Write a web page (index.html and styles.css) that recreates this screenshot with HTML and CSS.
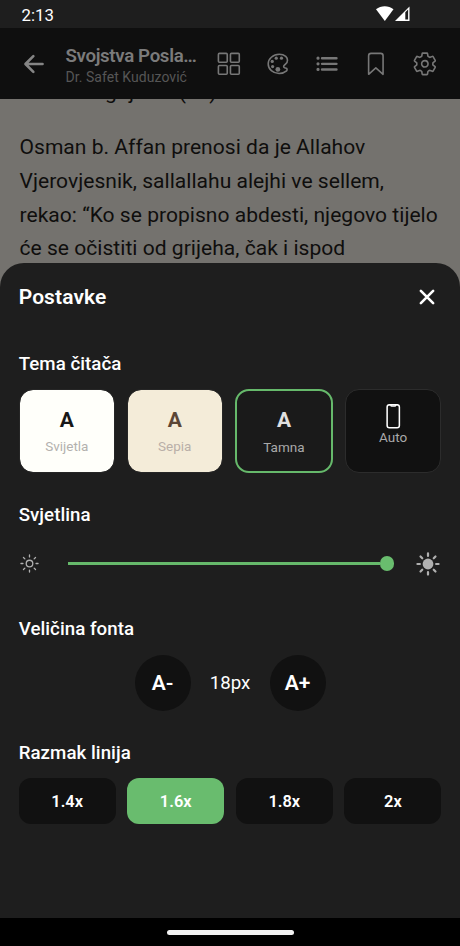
FILE: index.html
```html
<!DOCTYPE html>
<html lang="bs">
<head>
<meta charset="utf-8">
<title>Postavke</title>
<link rel="stylesheet" href="styles.css">
</head>
<body>
<div class="screen">
  <div class="status">
    <span class="time">2:13</span>
    <svg class="signals" viewBox="0 0 36 16" width="36" height="16"><path d="M1 3.3C6-.9 13.500-.9 18.500 3.300L9.800 15z" fill="#fff"/><path d="M34.500.5V15H20z" fill="#fff"/><path d="M30.300 6.200 33.100 3.500V13.600H30.300z" fill="#1e1e1e"/></svg>
  </div>
  <header class="bar">
    <svg class="icon back" viewBox="0 0 512 512"><path class="thick" d="M244 400 100 256l144-144M120 256h292"/></svg>
    <div class="book">
      <div class="book-title">Svojstva Posla…</div>
      <div class="book-author">Dr. Safet Kuduzović</div>
    </div>
    <nav class="tools">
      <svg class="icon" viewBox="0 0 512 512"><rect x="48" y="48" width="176" height="176" rx="20"/><rect x="288" y="48" width="176" height="176" rx="20"/><rect x="48" y="288" width="176" height="176" rx="20"/><rect x="288" y="288" width="176" height="176" rx="20"/></svg>
      <svg class="icon" viewBox="0 0 512 512"><path d="M430.110 347.900c-6.600-6.100-16.300-7.600-24.600-9-11.500-1.900-15.900-4-22.600-10-14.300-12.700-14.300-31.100 0-43.800l30.300-26.900c46.400-41 46.400-108.200 0-149.200-34.200-30.100-80.100-45-127.800-45-55.700 0-113.900 20.300-158.800 60.100-83.500 73.800-83.500 194.700 0 268.500 41.500 36.700 97.500 55 152.900 55.400h1.700c55.400 0 110-17.900 148.800-52.400 14.400-12.700 12-36.600.1-47.700z"/><g class="solid"><circle cx="144" cy="208" r="32"/><circle cx="152" cy="311" r="32"/><circle cx="224" cy="144" r="32"/><circle cx="256" cy="367" r="48"/><circle cx="328" cy="144" r="32"/></g></svg>
      <svg class="icon" viewBox="0 0 512 512"><path class="thick" d="M160 144h288M160 256h288M160 368h288"/><circle cx="80" cy="144" r="16"/><circle cx="80" cy="256" r="16"/><circle cx="80" cy="368" r="16"/></svg>
      <svg class="icon" viewBox="0 0 512 512"><path d="M352 48H160a48 48 0 0 0-48 48v368l144-128 144 128V96a48 48 0 0 0-48-48z"/></svg>
      <svg class="icon" viewBox="0 0 512 512"><path d="M262.290 192.310a64 64 0 1 0 57.400 57.400 64.130 64.130 0 0 0-57.400-57.400zM416.390 256a154.340 154.340 0 0 1-1.530 20.790l45.210 35.460a10.810 10.810 0 0 1 2.450 13.750l-42.770 74a10.810 10.810 0 0 1-13.140 4.590l-44.900-18.080a16.110 16.110 0 0 0-15.170 1.750A164.480 164.480 0 0 1 325 400.800a15.940 15.940 0 0 0-8.820 12.140l-6.730 47.890a11.080 11.080 0 0 1-10.680 9.170h-85.540a11.110 11.110 0 0 1-10.690-8.870l-6.720-47.820a16.070 16.070 0 0 0-9-12.220 155.300 155.300 0 0 1-21.460-12.570 16 16 0 0 0-15.110-1.710l-44.890 18.070a10.810 10.810 0 0 1-13.140-4.580l-42.770-74a10.800 10.800 0 0 1 2.450-13.750l38.210-30a16.050 16.050 0 0 0 6-14.080c-.36-4.170-.58-8.330-.58-12.500s.21-8.270.58-12.350a16 16 0 0 0-6.070-13.940l-38.190-30A10.810 10.810 0 0 1 49.480 186l42.770-74a10.810 10.810 0 0 1 13.140-4.590l44.900 18.080a16.110 16.110 0 0 0 15.170-1.750A164.480 164.480 0 0 1 187 111.200a15.940 15.940 0 0 0 8.820-12.140l6.730-47.890A11.080 11.080 0 0 1 213.230 42h85.540a11.110 11.110 0 0 1 10.690 8.870l6.720 47.820a16.070 16.070 0 0 0 9 12.220 155.300 155.300 0 0 1 21.460 12.570 16 16 0 0 0 15.110 1.710l44.890-18.070a10.810 10.810 0 0 1 13.140 4.580l42.770 74a10.800 10.800 0 0 1-2.450 13.750l-38.210 30a16.050 16.050 0 0 0-6.050 14.080c.33 4.140.55 8.300.55 12.470z"/></svg>
    </nav>
  </header>
  <main class="reader">
    <p class="previous">grijeha. (12)</p>
    <p>Osman b. Affan prenosi da je Allahov<br>Vjerovjesnik, sallallahu alejhi ve sellem,<br>rekao: “Ko se propisno abdesti, njegovo tijelo<br>će se očistiti od grijeha, čak i ispod</p>
  </main>
  <section class="sheet">
    <div class="sheet-head">
      <h1>Postavke</h1>
      <svg class="icon close" viewBox="0 0 512 512"><path class="thick" d="M368 368 144 144M368 144 144 368"/></svg>
    </div>
    <h2>Tema čitača</h2>
    <div class="themes">
      <div class="theme light"><b>A</b><span>Svijetla</span></div>
      <div class="theme sepia"><b>A</b><span>Sepia</span></div>
      <div class="theme dark"><b>A</b><span>Tamna</span></div>
      <div class="theme auto"><svg class="icon phone" viewBox="0 0 512 512"><rect x="128" y="16" width="256" height="480" rx="48"/><path d="M176 16h24a8 8 0 0 1 8 8 16 16 0 0 0 16 16h64a16 16 0 0 0 16-16 8 8 0 0 1 8-8h24"/></svg><span>Auto</span></div>
    </div>
    <h2 class="h-bright">Svjetlina</h2>
    <div class="brightness">
      <svg class="icon sun-low" viewBox="0 0 512 512"><path d="M256 48v48M256 416v48M403.080 108.920l-33.940 33.940M142.860 369.140l-33.940 33.940M464 256h-48M96 256H48M403.080 403.080l-33.940-33.940M142.860 142.860l-33.940-33.940"/><circle cx="256" cy="256" r="80"/></svg>
      <div class="slider"><div class="track"></div><div class="thumb"></div></div>
      <svg class="icon sun-high" viewBox="0 0 512 512"><path d="M256 48v48M256 416v48M403.080 108.920l-33.940 33.940M142.860 369.140l-33.940 33.940M464 256h-48M96 256H48M403.080 403.080l-33.940-33.940M142.860 142.860l-33.940-33.940"/><circle class="solid" cx="256" cy="256" r="106"/></svg>
    </div>
    <h2 class="h-size">Veličina fonta</h2>
    <div class="sizes">
      <div class="round">A-</div>
      <span class="size">18px</span>
      <div class="round">A+</div>
    </div>
    <h2 class="h-line">Razmak linija</h2>
    <div class="spacings">
      <div class="spacing">1.4x</div>
      <div class="spacing active">1.6x</div>
      <div class="spacing">1.8x</div>
      <div class="spacing">2x</div>
    </div>
  </section>
  <footer class="gesture"><div class="pill"></div></footer>
</div>
</body>
</html>
```
FILE: styles.css
```css
* { box-sizing: border-box; }
body { margin: 0; background: #000; font-family: Roboto, "Noto Sans", sans-serif; }
h1, h2, p { margin: 0; }
.screen { width: 460px; height: 946px; display: flex; flex-direction: column; overflow: hidden; background: #74726e; }
.status { height: 28px; flex: none; background: #1e1e1e; display: flex; align-items: center; justify-content: space-between; padding: 0 49px 0 21.500px; }
.time { color: #fff; font-size: 16.800px; line-height: 28px; padding-top: 2px; }
.signals { display: block; }
.icon { display: block; flex: none; width: 25.700px; height: 25.700px; fill: none; stroke: currentColor; stroke-width: 32; stroke-linecap: round; stroke-linejoin: round; }
.icon .thick { stroke-width: 48; }
.icon .solid { fill: currentColor; stroke: none; }
.bar { height: 71px; flex: none; background: #0f0f0f; color: #777; display: flex; align-items: center; padding: 0 22px 0 20px; }
.back { width: 28px; height: 28px; color: #858585; }
.book { width: 150px; margin: 4px 0 0 17.500px; white-space: nowrap; }
.book-title { font-size: 18.700px; line-height: 22px; font-weight: 600; letter-spacing: -0.35px; color: #7b7b7b; }
.book-author { font-size: 14px; line-height: 20px; letter-spacing: 0.05px; color: #565656; }
.tools { flex: 1; display: flex; justify-content: space-between; }
.reader { height: 164px; flex: none; overflow: hidden; padding-left: 19.500px; color: #0f0e0d; font-size: 21.060px; line-height: 33.700px; white-space: nowrap; letter-spacing: 0.02px; }
.previous { margin-top: -24px; margin-bottom: 21.500px; padding-left: 85.500px; letter-spacing: -0.05px; }
.sheet { flex: none; height: 655px; background: #1e1e1e; border-radius: 24px 24px 0 0; padding: 0 18.700px; color: #fff; }
.sheet-head { height: 67px; display: flex; align-items: center; justify-content: space-between; }
h1 { font-size: 21px; line-height: 28px; font-weight: 600; padding-top: 1px; letter-spacing: 0.1px; }
.close { width: 28px; height: 28px; }
h2 { font-size: 18.700px; line-height: 24px; font-weight: 500; letter-spacing: 0.05px; }
.sheet-head + h2 { margin-top: 22px; }
.themes { margin-top: 13px; height: 84px; display: grid; grid-template-columns: 96fr 96fr 98.500fr 96fr; gap: 11.700px; }
.theme { border-radius: 14px; display: flex; flex-direction: column; align-items: center; font-size: 13.500px; line-height: 18px; color: #a9a9a9; }
.theme b { font-size: 21px; line-height: 26px; margin: 17px 0 4px; }
.light { background: #fffffa; border: 1px solid #262626; background-clip: padding-box; color: #b3b1ae; }
.light b { color: #181818; }
.sepia { background: #f4ecd9; border: 1px solid #262626; background-clip: padding-box; color: #b9afa8; }
.sepia b { color: #5b4636; }
.dark { background: #1a1a1a; border: 2.340px solid #66b96b; }
.dark b { color: #e0e0e0; margin-top: 16px; margin-bottom: 5px; }
.auto { background: #111; border: 1px solid #2c2c2c; }
.phone { width: 24.500px; height: 24.500px; color: #fff; margin: 14px 0 -1px; }
.h-bright { margin-top: 30px; }
.brightness { display: flex; align-items: center; height: 28px; margin-top: 22.500px; color: #b0b0b0; }
.sun-low { width: 21px; height: 21px; }
.sun-high { width: 26px; height: 26px; stroke-width: 44; }
.slider { flex: 1; display: flex; align-items: center; margin: 0 21px 0 28.500px; }
.track { flex: 1; height: 3px; background: #66b96b; }
.thumb { flex: none; width: 14.500px; height: 14.500px; border-radius: 50%; background: #69bd6e; }
.h-size { margin-top: 39.500px; }
.sizes { display: flex; justify-content: center; align-items: center; height: 57px; margin-top: 13px; }
.round { width: 56px; height: 56px; border-radius: 50%; background: #111; font-size: 21px; font-weight: 600; display: flex; align-items: center; justify-content: center; padding-top: 1px; }
.size { width: 79px; text-align: center; font-size: 18.700px; padding-top: 1px; }
.h-line { margin-top: 30px; }
.spacings { display: grid; grid-template-columns: repeat(4, 1fr); gap: 11.700px; height: 46px; margin-top: 13px; }
.spacing { border-radius: 12px; background: #111; display: flex; align-items: center; justify-content: center; font-size: 16.400px; font-weight: 600; padding-top: 1px; }
.active { background: #69bc6e; }
.gesture { height: 28px; flex: none; background: #000; display: flex; justify-content: center; align-items: center; }
.pill { width: 127px; height: 5px; border-radius: 3px; background: #f2f2f2; }
```
